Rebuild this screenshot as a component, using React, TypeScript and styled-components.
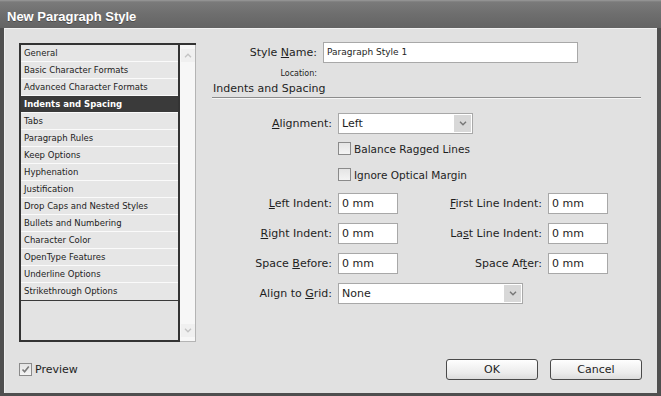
import styled, { createGlobalStyle } from "styled-components";

const GlobalStyle = createGlobalStyle`
  html, body {
    margin: 0;
    padding: 0;
    background: #e1e1e1;
  }
  * { box-sizing: border-box; }
`;

const Window = styled.div`
  width: 661px;
  height: 396px;
  display: flex;
  flex-direction: column;
  font-family: "DejaVu Sans", "Liberation Sans", sans-serif;
  color: #1e1e1e;
  background: #4f4f4f;
`;

const TitleBar = styled.div`
  height: 28px;
  display: flex;
  align-items: center;
  padding: 4px 0 0 7px;
  background: linear-gradient(#9a9a9a 0px, #7a7a7a 2px, #6e6e6e 14px, #646464 28px);
  color: #ffffff;
  font-family: "Liberation Sans", Arial, sans-serif;
  font-weight: bold;
  font-size: 13px;
  text-shadow: 0 1px 0 #4a4a4a;
`;

const Frame = styled.div`
  flex: 1;
  display: flex;
  flex-direction: column;
  margin: 0 4px 3px 4px;
  background: #e1e1e1;
  border-top: 1px solid #f2f2f2;
  border-left: 1px solid #eeeeee;
`;

const Main = styled.div`
  display: flex;
  gap: 17px;
  padding: 13px 16px 0 14px;
`;

const ListFrame = styled.div`
  display: flex;
  margin-top: 1px;
  width: 177px;
  height: 299px;
  border-top: 2px solid #333333;
`;

const ListColumn = styled.div`
  width: 161px;
  display: flex;
  flex-direction: column;
  border-left: 2px solid #333333;
  border-right: 2px solid #333333;
  border-bottom: 2px solid #333333;
  background: #e4e4e4;
`;

const ListItem = styled.div<{ $selected?: boolean }>`
  height: 17px;
  line-height: 16px;
  padding-left: 3px;
  font-size: 8.5px;
  border-bottom: 1px solid #fafafa;
  white-space: nowrap;
  background: ${(p) => (p.$selected ? "#3a3a3a" : "#e6e6e6")};
  color: ${(p) => (p.$selected ? "#ffffff" : "#222222")};
  font-weight: ${(p) => (p.$selected ? "bold" : "normal")};
  &:nth-last-child(2) {
    border-bottom: none;
  }
`;

const ListFiller = styled.div`
  flex: 1;
  border-top: 1px solid #3a3a3a;
  background: #e3e3e3;
`;

const ScrollBar = styled.div`
  width: 16px;
  display: flex;
  flex-direction: column;
  justify-content: space-between;
  padding: 4px 0 4px 1px;
  background: #f7f7f7;
  border-right: 1px solid #b4b4b4;
  border-bottom: 1px solid #b4b4b4;
`;

const ScrollArrow = styled.div`
  height: 13px;
  display: flex;
  align-items: center;
  justify-content: center;
  background: #f0f0f0;
`;

const Panel = styled.div`
  width: 429px;
  display: flex;
  flex-direction: column;
`;

const NameRow = styled.div`
  display: flex;
  align-items: center;
  height: 21px;
`;

const SideLabel = styled.div<{ $size?: number }>`
  width: 104px;
  margin-right: 6px;
  text-align: right;
  font-size: ${(p) => p.$size ?? 11}px;
  white-space: nowrap;
`;

const TextBox = styled.div<{ $width: number; $size?: number }>`
  width: ${(p) => p.$width}px;
  height: 21px;
  line-height: 19px;
  padding-left: 3px;
  background: #ffffff;
  border: 1px solid #a8a8a8;
  font-size: ${(p) => p.$size ?? 11}px;
  white-space: nowrap;
`;

const LocationRow = styled.div`
  display: flex;
  margin-top: 6px;
  height: 10px;
  line-height: 10px;
`;

const SectionHeader = styled.div`
  margin: 3px 0 0 -1px;
  padding: 0 0 1px 1px;
  height: 16px;
  line-height: 14px;
  font-size: 11px;
  border-bottom: 1px solid #8c8c8c;
  box-shadow: 0 1px 0 #f6f6f6;
`;

const FormGrid = styled.div`
  margin-top: 15px;
  display: grid;
  grid-template-columns: 119px 60px 138px 60px;
  grid-template-rows: 29px 26px 25px 30px 30px 30px 21px;
  column-gap: 6px;
  align-items: start;
`;

const FieldLabel = styled.div<{ $col?: number }>`
  grid-column: ${(p) => p.$col ?? 1};
  text-align: right;
  font-size: 11px;
  line-height: 21px;
  white-space: nowrap;
`;

const SelectBox = styled.div<{ $width: number }>`
  grid-column: 2 / span 3;
  width: ${(p) => p.$width}px;
  height: 21px;
  display: flex;
  align-items: stretch;
  background: #ffffff;
  border: 1px solid #a8a8a8;
`;

const SelectValue = styled.div`
  flex: 1;
  padding-left: 3px;
  line-height: 19px;
  font-size: 11px;
`;

const SelectButton = styled.div`
  width: 17px;
  margin: 1px;
  display: flex;
  align-items: center;
  justify-content: center;
  background: #d8d8d8;
`;

const CheckRow = styled.div`
  grid-column: 2 / span 3;
  display: flex;
  align-items: center;
  height: 13px;
`;

const Box = styled.div`
  width: 13px;
  height: 13px;
  display: flex;
  align-items: center;
  justify-content: center;
  border: 1px solid #8a8a8a;
  background: linear-gradient(#e4e4e4, #f4f4f4);
`;

const CheckText = styled.span<{ $size?: number }>`
  margin-left: 3px;
  font-size: ${(p) => p.$size ?? 10.5}px;
  white-space: nowrap;
`;

const Footer = styled.div`
  display: flex;
  align-items: center;
  margin-top: 17px;
  height: 21px;
  padding: 0 15px 0 14px;
`;

const PreviewCheck = styled.div`
  display: flex;
  align-items: center;
  flex: 1;
`;

const Button = styled.div`
  width: 92px;
  height: 21px;
  margin-left: 12px;
  display: flex;
  align-items: center;
  justify-content: center;
  font-size: 11px;
  border: 1px solid #4a4a4a;
  border-radius: 3px;
  background: linear-gradient(#fefefe, #ebebeb 70%, #dcdcdc);
`;

const Chevron = ({ up, color = "#777" }: { up?: boolean; color?: string }) => (
  <svg width="8" height="5" viewBox="0 0 8 5">
    <path
      d={up ? "M1 4.2 L4 1.2 L7 4.2" : "M1 0.8 L4 3.8 L7 0.8"}
      fill="none"
      stroke={color}
      strokeWidth="1.4"
    />
  </svg>
);

const Check = () => (
  <svg width="9" height="9" viewBox="0 0 9 9">
    <path d="M1.5 4.5 L3.6 6.8 L7.8 1.5" fill="none" stroke="#7a7a7a" strokeWidth="1.6" />
  </svg>
);

const items = [
  "General",
  "Basic Character Formats",
  "Advanced Character Formats",
  "Indents and Spacing",
  "Tabs",
  "Paragraph Rules",
  "Keep Options",
  "Hyphenation",
  "Justification",
  "Drop Caps and Nested Styles",
  "Bullets and Numbering",
  "Character Color",
  "OpenType Features",
  "Underline Options",
  "Strikethrough Options",
];

const App = () => {
  return (
    <>
      <GlobalStyle />
      <Window>
        <TitleBar>New Paragraph Style</TitleBar>
        <Frame>
          <Main>
            <ListFrame>
              <ListColumn>
                {items.map((item) => (
                  <ListItem key={item} $selected={item === "Indents and Spacing"}>
                    {item}
                  </ListItem>
                ))}
                <ListFiller />
              </ListColumn>
              <ScrollBar>
                <ScrollArrow><Chevron up color="#c4c4c4" /></ScrollArrow>
                <ScrollArrow><Chevron color="#c4c4c4" /></ScrollArrow>
              </ScrollBar>
            </ListFrame>

            <Panel>
              <NameRow>
                <SideLabel>Style <u>N</u>ame:</SideLabel>
                <TextBox $width={255} $size={9}>Paragraph Style 1</TextBox>
              </NameRow>
              <LocationRow>
                <SideLabel $size={8}>Location:</SideLabel>
              </LocationRow>
              <SectionHeader>Indents and Spacing</SectionHeader>

              <FormGrid>
                <FieldLabel><u>A</u>lignment:</FieldLabel>
                <SelectBox $width={135}>
                  <SelectValue>Left</SelectValue>
                  <SelectButton><Chevron /></SelectButton>
                </SelectBox>

                <CheckRow>
                  <Box />
                  <CheckText>Balance Ragged Lines</CheckText>
                </CheckRow>
                <CheckRow>
                  <Box />
                  <CheckText>Ignore Optical Margin</CheckText>
                </CheckRow>

                <FieldLabel><u>L</u>eft Indent:</FieldLabel>
                <TextBox $width={60}>0 mm</TextBox>
                <FieldLabel $col={3}><u>F</u>irst Line Indent:</FieldLabel>
                <TextBox $width={60}>0 mm</TextBox>

                <FieldLabel><u>R</u>ight Indent:</FieldLabel>
                <TextBox $width={60}>0 mm</TextBox>
                <FieldLabel $col={3}>La<u>s</u>t Line Indent:</FieldLabel>
                <TextBox $width={60}>0 mm</TextBox>

                <FieldLabel>Space <u>B</u>efore:</FieldLabel>
                <TextBox $width={60}>0 mm</TextBox>
                <FieldLabel $col={3}>Space Af<u>t</u>er:</FieldLabel>
                <TextBox $width={60}>0 mm</TextBox>

                <FieldLabel>Align to <u>G</u>rid:</FieldLabel>
                <SelectBox $width={185}>
                  <SelectValue>None</SelectValue>
                  <SelectButton><Chevron /></SelectButton>
                </SelectBox>
              </FormGrid>
            </Panel>
          </Main>

          <Footer>
            <PreviewCheck>
              <Box><Check /></Box>
              <CheckText $size={11}>Preview</CheckText>
            </PreviewCheck>
            <Button>OK</Button>
            <Button>Cancel</Button>
          </Footer>
        </Frame>
      </Window>
    </>
  );
};

export default App;
